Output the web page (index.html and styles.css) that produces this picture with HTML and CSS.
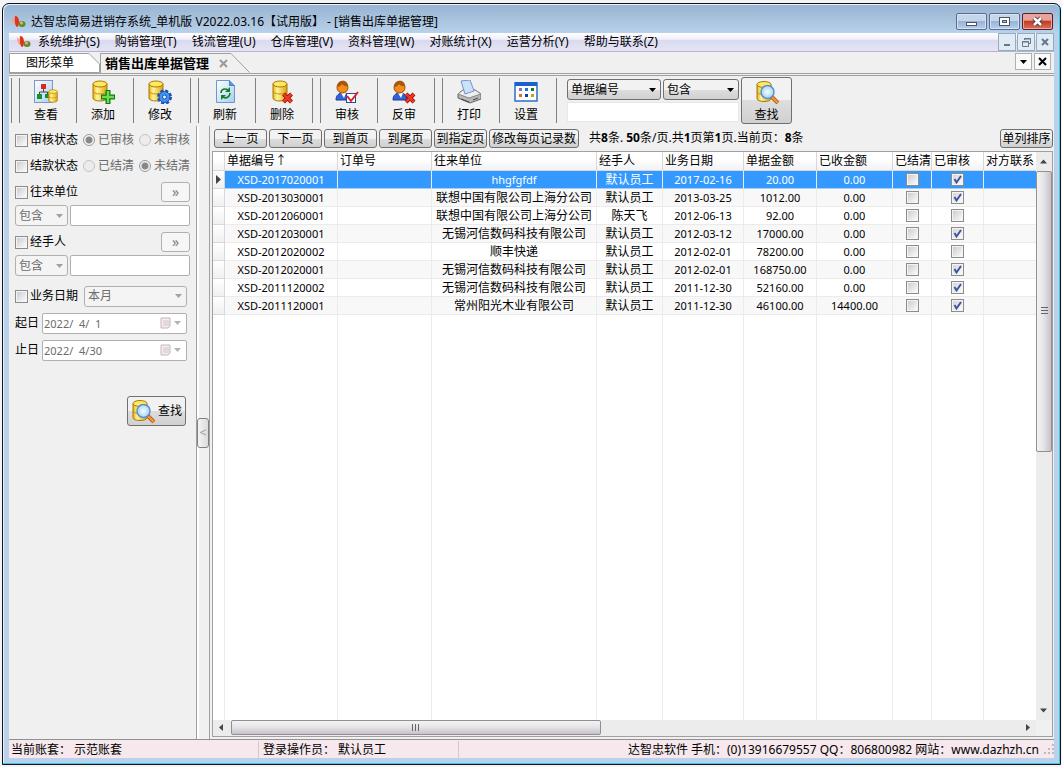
FILE: index.html
```
<!DOCTYPE html>
<html lang="zh-CN">
<head>
<meta charset="utf-8">
<title>达智忠简易进销存系统</title>
<link rel="stylesheet" href="styles.css">
</head>
<body>
<svg class="defs" aria-hidden="true">
  <defs>
    <linearGradient id="gold"><stop offset="0" stop-color="#e8b414"/><stop offset=".3" stop-color="#fff59a"/><stop offset="1" stop-color="#e0a010"/></linearGradient>
    <radialGradient id="lens"><stop offset="0" stop-color="#f4fcff"/><stop offset="1" stop-color="#a8d4f4"/></radialGradient>
    <linearGradient id="page" x2="1" y2="1"><stop offset="0" stop-color="#fff"/><stop offset="1" stop-color="#a9cdf3"/></linearGradient>
    <symbol id="db" viewBox="0 0 16 22"><path d="M1 4v14c0 4 14 4 14 0V4z" fill="url(#gold)" stroke="#a87808"/><ellipse cx="8" cy="4" rx="7" ry="3" fill="#ffe95c" stroke="#a87808"/><path d="M1 11c0 4 14 4 14 0" fill="none" stroke="#c8900c"/></symbol>
    <symbol id="user" viewBox="0 0 24 24"><path d="M1 20c0-5 3-7 7-7s7 2 7 7z" fill="#3263d8" stroke="#1a3c9c"/><path d="M6 13l3 5 2-5z" fill="#fff"/><circle cx="7.500" cy="7.500" r="5.500" fill="#f28c1c" stroke="#9c4a08"/><path d="M2 7c0-8 11-8 11-1-3 1-5-1-6-2-1 2-3 3-5 3z" fill="#a8560c"/></symbol>
    <symbol id="cross" viewBox="0 0 12 12"><path d="M2 2l8 8M10 2l-8 8" stroke="#8c0c04" stroke-width="4"/><path d="M2 2l8 8M10 2l-8 8" stroke="#f03820" stroke-width="2.500"/></symbol>
    <symbol id="find" viewBox="0 0 24 24"><use href="#db" x="1" y="0" width="16" height="23"/><path d="M17 17l6 6" stroke="#b85c10" stroke-width="4"/><path d="M17 17l6 6" stroke="#f59a3c" stroke-width="2"/><circle cx="12.500" cy="12" r="6.500" fill="url(#lens)" stroke="#5c90d0" stroke-width="1.500"/></symbol>
    <symbol id="logo" viewBox="0 0 14 12"><path d="M3 0c3 0 4 3 4 6s-1 5-2 5-3-4-2-11z" fill="#e23318"/><path d="M0 1c2 1 3 5 3 8-2-1-3-4-3-8z" fill="#f8a090"/><ellipse cx="10" cy="8" rx="3.500" ry="3" fill="#5c8c30"/><circle cx="9.500" cy="7" r="1.500" fill="#f4b060"/></symbol>
    <symbol id="cal" viewBox="0 0 12 12"><path d="M1 1h9v8l-2 2H1z" fill="#f6eeee" stroke="#c4b4b8"/><path d="M3 4h6M3 6h6M3 8h6M4 3v6M6 3v6M8 3v6" stroke="#d4c8c8" stroke-width=".6"/></symbol>
  </defs>
</svg>
<div class="window">
  <header class="titlebar">
    <svg class="logo"><use href="#logo"/></svg>
    <h1 class="title">达智忠简易进销存系统_单机版 V2022.03.16【试用版】 - [销售出库单据管理]</h1>
    <div class="winbtns">
      <button class="winbtn" aria-label="最小化"><svg viewBox="0 0 29 15"><rect x="9.500" y="8.500" width="10" height="3" fill="#fff" stroke="#4c5468"/></svg></button>
      <button class="winbtn" aria-label="最大化"><svg viewBox="0 0 29 15"><rect x="9.500" y="3.500" width="10" height="8" fill="#fff" stroke="#4c5468"/><rect x="12.500" y="6.500" width="4" height="2" fill="#a8c0dc" stroke="#4c5468"/></svg></button>
      <button class="winbtn winbtn-close" aria-label="关闭"><svg viewBox="0 0 29 15"><path d="M11 4l7 7M18 4l-7 7" stroke="#4c3448" stroke-width="4.500"/><path d="M11 4l7 7M18 4l-7 7" stroke="#fff" stroke-width="2.500"/></svg></button>
    </div>
  </header>
  <nav class="menubar">
    <svg class="logo"><use href="#logo"/></svg>
    <button class="menu">系统维护(S)</button>
    <button class="menu">购销管理(T)</button>
    <button class="menu">钱流管理(U)</button>
    <button class="menu">仓库管理(V)</button>
    <button class="menu">资料管理(W)</button>
    <button class="menu">对账统计(X)</button>
    <button class="menu">运营分析(Y)</button>
    <button class="menu">帮助与联系(Z)</button>
    <div class="mdibtns">
      <button class="mdibtn" aria-label="最小化子窗口"><svg viewBox="0 0 16 16"><path d="M5 11h6" stroke="#64788c" stroke-width="2"/></svg></button>
      <button class="mdibtn" aria-label="还原子窗口"><svg viewBox="0 0 16 16"><path d="M6.500 6V4.500h6v5H11M6 5h7" fill="none" stroke="#64788c"/><path d="M4.500 7.500h6v5h-6zM4 8h7" fill="none" stroke="#64788c"/></svg></button>
      <button class="mdibtn" aria-label="关闭子窗口"><svg viewBox="0 0 16 16"><path d="M5 5l6 6M11 5l-6 6" stroke="#64788c" stroke-width="2"/></svg></button>
    </div>
  </nav>
  <div class="tabs">
    <button class="tab"><svg class="tabshape" viewBox="0 0 91 20"><path d="M.5 20V.500H80L90.500 11v8.500H0" fill="#fff" stroke="#a0a0a0"/></svg><span>图形菜单</span></button>
    <button class="tab tab-active"><svg class="tabshape" viewBox="0 0 150 20"><path d="M.5 20V.500H131L149.500 19.500" fill="#f0f0f0" stroke="#a0a0a0"/></svg><span>销售出库单据管理</span><svg class="tabclose" viewBox="0 0 9 9"><path d="M1 1l7 7M8 1L1 8" stroke="#999" stroke-width="2"/></svg></button>
    <div class="tabtools">
      <button class="tabtool" aria-label="标签列表"><svg viewBox="0 0 15 15"><path d="M4 6h7l-3.500 4z"/></svg></button>
      <button class="tabtool" aria-label="关闭标签"><svg viewBox="0 0 15 15"><path d="M4 4l7 7M11 4l-7 7" stroke="#000" stroke-width="2"/></svg></button>
    </div>
  </div>
  <div class="toolbar">
    <div class="toolgroup">
      <button class="tool"><svg class="icon" viewBox="0 0 24 24"><rect x=".5" y=".5" width="18" height="22" fill="url(#page)" stroke="#7c98c8"/><path d="M9.500 8v4M5.500 15v-3h8v3" fill="none" stroke="#444"/><rect x="7" y="4" width="5" height="5" fill="#e02818"/><rect x="3" y="14" width="5" height="5" fill="#189028"/><rect x="11" y="14" width="4" height="4" fill="#189028"/><use href="#db" x="14" y="9" width="10" height="14"/></svg><span>查看</span></button>
      <button class="tool"><svg class="icon" viewBox="0 0 24 24"><use href="#db" x="1" y="0" width="16" height="22"/><path d="M17 10v14M10 17h14" stroke="#0c7c10" stroke-width="5"/><path d="M17 11v12M11 17h12" stroke="#6cdc50" stroke-width="2.500"/></svg><span>添加</span></button>
      <button class="tool"><svg class="icon" viewBox="0 0 24 24"><use href="#db" x="0" y="0" width="16" height="22"/><circle cx="16.500" cy="17" r="6" fill="none" stroke="#1c50b4" stroke-width="3" stroke-dasharray="3 1.700"/><circle cx="16.500" cy="17" r="5.500" fill="#3f94f0" stroke="#1c50b4"/><circle cx="16.500" cy="17" r="2" fill="#e8f4ff" stroke="#1c50b4"/></svg><span>修改</span></button>
    </div>
    <div class="toolgroup">
      <button class="tool"><svg class="icon" viewBox="0 0 24 24"><path d="M3.500 .5h13l5 5v17h-18z" fill="url(#page)" stroke="#6c98d0"/><path d="M16.500 .5v5h5" fill="#5c98e8" stroke="#4c80c8"/><path d="M8 13c0-4 4-5 7-3M17 13c0 4-4 6-7 4" fill="none" stroke="#108020" stroke-width="1.600"/><path d="M17 7v5h-5zM8 20v-5h5z" fill="#108020"/></svg><span>刷新</span></button>
      <button class="tool"><svg class="icon" viewBox="0 0 24 24"><use href="#db" x="2" y="0" width="16" height="22"/><use href="#cross" x="11" y="12" width="13" height="12"/></svg><span>删除</span></button>
    </div>
    <div class="toolgroup">
      <button class="tool"><svg class="icon" viewBox="0 0 24 24"><use href="#user" width="24" height="24"/><rect x="11.500" y="13.500" width="9" height="9" fill="#fff" stroke="#284898"/><path d="M12 16l4 5 7-9" fill="none" stroke="#e02020" stroke-width="2"/></svg><span>审核</span></button>
      <button class="tool"><svg class="icon" viewBox="0 0 24 24"><use href="#user" width="24" height="24"/><use href="#cross" x="12" y="12" width="12" height="12"/></svg><span>反审</span></button>
    </div>
    <div class="toolgroup">
      <button class="tool"><svg class="icon" viewBox="0 0 24 24"><path d="M1 14l5-4h12l6 4v5l-11 4L1 18z" fill="#b8b8b8" stroke="#666"/><path d="M1 14l11 4 12-4-6-4H6z" fill="#eee" stroke="#888"/><path d="M4 1l9-1 4 11-9 3z" fill="#c8e2fc" stroke="#7c90c4"/><path d="M4 19l8 3M16 20l5-2" stroke="#444"/></svg><span>打印</span></button>
      <button class="tool"><svg class="icon" viewBox="0 0 24 24"><rect x="1" y="3" width="22" height="18" fill="#fff" stroke="#2c6cc8" stroke-width="1.500"/><path d="M1 4h22" stroke="#1c60d0" stroke-width="4"/><path d="M5 9.500h3" stroke="#8870b8" stroke-width="3"/><path d="M11 9.500h3" stroke="#2870e0" stroke-width="3"/><path d="M17 9.500h3" stroke="#108020" stroke-width="3"/><path d="M5 15.500h3" stroke="#f06030" stroke-width="3"/><path d="M11 15.500h3" stroke="#103cb0" stroke-width="3"/><path d="M17 15.500h3" stroke="#d09818" stroke-width="3"/></svg><span>设置</span></button>
    </div>
    <form class="search">
      <div class="searchfields">
        <div class="searchselects">
          <select class="select select-field" aria-label="查找字段"><option>单据编号</option></select>
          <select class="select select-match" aria-label="匹配方式"><option>包含</option></select>
        </div>
        <input class="searchtext" type="text" aria-label="查找内容">
      </div>
      <button class="searchbtn" type="button"><svg class="icon"><use href="#find"/></svg><span>查找</span></button>
    </form>
  </div>
  <main class="main">
    <aside class="filters">
      <div class="filter">
        <label class="check"><input type="checkbox">审核状态</label>
        <label class="radio"><input type="radio" name="audit" checked disabled>已审核</label>
        <label class="radio"><input type="radio" name="audit" disabled>未审核</label>
      </div>
      <div class="filter">
        <label class="check"><input type="checkbox">结款状态</label>
        <label class="radio"><input type="radio" name="settle" disabled>已结清</label>
        <label class="radio"><input type="radio" name="settle" checked disabled>未结清</label>
      </div>
      <div class="filter filter-split">
        <label class="check"><input type="checkbox">往来单位</label>
        <button class="more" disabled>»</button>
      </div>
      <div class="filter filter-input">
        <select class="select" disabled aria-label="往来单位匹配"><option>包含</option></select>
        <input class="text" type="text" disabled aria-label="往来单位内容">
      </div>
      <div class="filter filter-split">
        <label class="check"><input type="checkbox">经手人</label>
        <button class="more" disabled>»</button>
      </div>
      <div class="filter filter-input">
        <select class="select" disabled aria-label="经手人匹配"><option>包含</option></select>
        <input class="text" type="text" disabled aria-label="经手人内容">
      </div>
      <div class="filter filter-date">
        <label class="check"><input type="checkbox">业务日期</label>
        <select class="select" disabled aria-label="日期范围"><option>本月</option></select>
      </div>
      <div class="filter filter-day">
        <label for="from">起日</label>
        <div class="datebox"><input id="from" class="date" type="text" value="2022/  4/  1" disabled><svg class="cal"><use href="#cal"/></svg><svg class="drop" viewBox="0 0 7 4"><path d="M0 0h7L3.500 4z" fill="#b8b4ac"/></svg></div>
      </div>
      <div class="filter filter-day">
        <label for="to">止日</label>
        <div class="datebox"><input id="to" class="date" type="text" value="2022/  4/30" disabled><svg class="cal"><use href="#cal"/></svg><svg class="drop" viewBox="0 0 7 4"><path d="M0 0h7L3.500 4z" fill="#b8b4ac"/></svg></div>
      </div>
      <button class="findbtn"><svg class="icon"><use href="#find"/></svg>查找</button>
    </aside>
    <div class="splitter"><button class="collapse" aria-label="收起筛选栏">&lt;</button></div>
    <section class="content">
      <div class="pager">
        <button class="page">上一页</button>
        <button class="page">下一页</button>
        <button class="page">到首页</button>
        <button class="page">到尾页</button>
        <button class="page">到指定页</button>
        <button class="page page-wide">修改每页记录数</button>
        <p class="summary">共<b>8</b>条. <b>50</b>条/页.共<b>1</b>页第<b>1</b>页.当前页：<b>8</b>条</p>
        <button class="page sort">单列排序</button>
      </div>
      <div class="gridbox">
        <div class="tablebox">
          <table class="grid">
            <colgroup><col class="c-mark"><col class="c-no"><col class="c-order"><col class="c-unit"><col class="c-staff"><col class="c-date"><col class="c-sum"><col class="c-paid"><col class="c-settled"><col class="c-audited"><col></colgroup>
            <thead><tr><th></th><th>单据编号↑</th><th>订单号</th><th>往来单位</th><th>经手人</th><th>业务日期</th><th>单据金额</th><th>已收金额</th><th>已结清</th><th>已审核</th><th>对方联系</th></tr></thead>
            <tbody>
              <tr class="selected"><th><svg class="mark" viewBox="0 0 5 9"><path d="M0 0l5 4.500L0 9z" fill="#444"/></svg></th><td>XSD-2017020001</td><td></td><td>hhgfgfdf</td><td class="cn">默认员工</td><td>2017-02-16</td><td>20.00</td><td>0.00</td><td><input type="checkbox" aria-label="已结清"></td><td><input type="checkbox" aria-label="已审核" checked></td><td></td></tr>
              <tr><th></th><td>XSD-2013030001</td><td></td><td class="cn">联想中国有限公司上海分公司</td><td class="cn">默认员工</td><td>2013-03-25</td><td>1012.00</td><td>0.00</td><td><input type="checkbox" aria-label="已结清"></td><td><input type="checkbox" aria-label="已审核" checked></td><td></td></tr>
              <tr><th></th><td>XSD-2012060001</td><td></td><td class="cn">联想中国有限公司上海分公司</td><td class="cn">陈天飞</td><td>2012-06-13</td><td>92.00</td><td>0.00</td><td><input type="checkbox" aria-label="已结清"></td><td><input type="checkbox" aria-label="已审核"></td><td></td></tr>
              <tr><th></th><td>XSD-2012030001</td><td></td><td class="cn">无锡河信数码科技有限公司</td><td class="cn">默认员工</td><td>2012-03-12</td><td>17000.00</td><td>0.00</td><td><input type="checkbox" aria-label="已结清"></td><td><input type="checkbox" aria-label="已审核" checked></td><td></td></tr>
              <tr><th></th><td>XSD-2012020002</td><td></td><td class="cn">顺丰快递</td><td class="cn">默认员工</td><td>2012-02-01</td><td>78200.00</td><td>0.00</td><td><input type="checkbox" aria-label="已结清"></td><td><input type="checkbox" aria-label="已审核"></td><td></td></tr>
              <tr><th></th><td>XSD-2012020001</td><td></td><td class="cn">无锡河信数码科技有限公司</td><td class="cn">默认员工</td><td>2012-02-01</td><td>168750.00</td><td>0.00</td><td><input type="checkbox" aria-label="已结清"></td><td><input type="checkbox" aria-label="已审核" checked></td><td></td></tr>
              <tr><th></th><td>XSD-2011120002</td><td></td><td class="cn">无锡河信数码科技有限公司</td><td class="cn">默认员工</td><td>2011-12-30</td><td>52160.00</td><td>0.00</td><td><input type="checkbox" aria-label="已结清"></td><td><input type="checkbox" aria-label="已审核" checked></td><td></td></tr>
              <tr><th></th><td>XSD-2011120001</td><td></td><td class="cn">常州阳光木业有限公司</td><td class="cn">默认员工</td><td>2011-12-30</td><td>46100.00</td><td>14400.00</td><td><input type="checkbox" aria-label="已结清"></td><td><input type="checkbox" aria-label="已审核" checked></td><td></td></tr>
              <tr class="filler"><td></td><td></td><td></td><td></td><td></td><td></td><td></td><td></td><td></td><td></td><td></td></tr>
            </tbody>
          </table>
        </div>
        <div class="vscroll">
          <svg class="arrow" viewBox="0 0 15 18"><path d="M4 11h7L7.500 7z" fill="#444"/></svg>
          <div class="vtrack"><div class="vthumb"><svg class="vgrip" viewBox="0 0 7 8"><path d="M0 .5h7M0 3.500h7M0 6.500h7" stroke="#666"/></svg></div></div>
          <svg class="arrow" viewBox="0 0 15 18"><path d="M4 7h7l-3.500 4z" fill="#444"/></svg>
        </div>
        <div class="hscroll">
          <svg class="arrow" viewBox="0 0 18 15"><path d="M10 4v7L6 7.500z" fill="#444"/></svg>
          <div class="htrack"><div class="hthumb"><svg class="hgrip" viewBox="0 0 8 7"><path d="M.5 0v7M3.500 0v7M6.500 0v7" stroke="#666"/></svg></div></div>
          <svg class="arrow" viewBox="0 0 18 15"><path d="M8 4v7l4-3.500z" fill="#444"/></svg>
        </div>
      </div>
    </section>
  </main>
  <footer class="status">
    <div class="pane pane-book">当前账套：&nbsp;示范账套</div>
    <div class="pane pane-user">登录操作员：&nbsp;默认员工</div>
    <div class="pane pane-info">达智忠软件 手机：(0)13916679557 QQ：806800982 网站：www.dazhzh.cn</div>
    <svg class="sizegrip" viewBox="0 0 10 10"><path d="M8 1h2M8 5h2M4 5h2M8 9h2M4 9h2M0 9h2" stroke="#c4b8bc" stroke-width="2"/></svg>
  </footer>
</div>
</body>
</html>
```
FILE: styles.css
```
* { box-sizing: border-box; }
html, body { height: 100%; }
body {
  margin: 0;
  padding: 3px 1px 2px 2px;
  background: #f4f4f6;
  color: #000;
  font: 12px/16px "Noto Sans", "Noto Sans CJK SC", sans-serif;
}
button, input, select { font: inherit; color: inherit; margin: 0; }
button { padding: 0; border: 0; background: none; white-space: nowrap; }
svg { display: block; flex: none; }
.defs { position: absolute; width: 0; height: 0; }

.window {
  display: flex;
  flex-direction: column;
  height: 100%;
  padding: 0 6px 6px;
  border: 1px solid #101418;
  border-radius: 7px 7px 0 0;
  background: #b9d1ea;
  box-shadow: inset 0 -1px #40c8e8, inset -1px 0 #40c8e8, inset 1px 1px #e8f2fc;
}
.titlebar {
  display: flex;
  align-items: center;
  gap: 5px;
  height: 28px;
  margin: 1px -5px 0;
  padding: 5px 6px 0 8px;
  border-radius: 6px 6px 0 0;
  background: linear-gradient(#98b4d2, #b9d1ea);
}
.logo { width: 14px; height: 12px; }
.title { flex: 1; margin: 0; font-size: 12px; font-weight: 400; white-space: pre; }
.winbtns { display: flex; gap: 2px; }
.winbtn {
  width: 31px;
  height: 17px;
  border: 1px solid #5c6c90;
  border-radius: 2px;
  background: linear-gradient(#c4d6ea 0 45%, #98b4d4 50%, #b4d0ec);
  box-shadow: inset 0 0 0 1px #d4e2f2;
}
.winbtn-close {
  border-color: #58202c;
  background: linear-gradient(#e8a498 0 40%, #c03c24 50%, #d8745c);
  box-shadow: inset 0 0 0 1px #eca498;
}

.menubar {
  display: flex;
  align-items: center;
  gap: 15px;
  height: 19px;
  padding-left: 8px;
  border-bottom: 1px solid #b4b4cc;
  background: linear-gradient(#fff, #f0eefa 35%, #d8daf0 40%, #e6e4f4);
}
.menubar .logo { margin-right: -8px; }
.mdibtns { display: flex; gap: 1px; margin-left: auto; }
.mdibtn { width: 18px; height: 18px; border: 1px solid #94acc0; background: #e0ebf6; }

.tabs { display: flex; height: 24px; padding-top: 1px; background: #f0f0f0; border-bottom: 3px double #a0a0a0; }
.tab { position: relative; display: flex; align-items: center; width: 91px; height: 20px; padding-left: 17px; }
.tab span { position: relative; }
.tab-active { width: 150px; padding-left: 5px; gap: 10px; font-size: 13px; font-weight: 700; }
.tabshape { position: absolute; inset: 0; width: 100%; height: 100%; }
.tabclose { position: relative; width: 9px; height: 9px; }
.tabtools { display: flex; gap: 2px; margin-left: auto; padding-right: 3px; }
.tabtool { width: 17px; height: 17px; border: 1px solid #b0b0b0; background: #fafafa; }

.toolbar { display: flex; height: 50px; padding: 2px 0 3px 2px; background: #f0f0f0; }
.toolgroup { display: flex; margin-right: 7px; border-left: 1px solid #808080; }
.toolgroup:first-child { padding-left: 7px; }
.toolgroup:first-child .tool:first-child { border-left: 1px solid #808080; width: 58px; }
.tool {
  display: flex;
  flex-direction: column;
  align-items: center;
  gap: 3px;
  width: 57px;
  padding: 2px 4px 0 0;
  border-right: 1px solid #808080;
}
.icon { width: 24px; height: 24px; }
.search { display: flex; gap: 2px; margin-left: 3px; }
.searchfields { display: flex; flex-direction: column; gap: 2px; width: 172px; padding-top: 1px; }
.searchselects { display: flex; gap: 2px; }
.select {
  appearance: none;
  height: 21px;
  padding: 0 18px 0 3px;
  border: 1px solid #707070;
  border-radius: 3px;
  background: url("data:image/svg+xml,%3Csvg xmlns='http://www.w3.org/2000/svg' width='7' height='4'%3E%3Cpath d='M0 0h7L3.500 4z'/%3E%3C/svg%3E") right 4px center no-repeat, linear-gradient(#f2f2f2 50%, #dedede 50%, #d0d0d0);
}
.select:disabled {
  color: #6c6c6c;
  opacity: 1;
  border-color: #b0b0b0;
  background: url("data:image/svg+xml,%3Csvg xmlns='http://www.w3.org/2000/svg' width='7' height='4'%3E%3Cpath fill='%23a0a0a0' d='M0 0h7L3.500 4z'/%3E%3C/svg%3E") right 4px center no-repeat #f4f4f4;
}
.select-field { width: 94px; }
.select-match { width: 76px; }
.searchtext { width: 100%; height: 20px; border: 1px solid #ece4ec; background: #fff; }
.searchbtn {
  display: flex;
  flex-direction: column;
  align-items: center;
  gap: 3px;
  width: 51px;
  height: 47px;
  margin-top: -1px;
  padding-top: 2px;
  border: 1px solid #707070;
  border-radius: 3px;
  background: linear-gradient(#f2f2f2 50%, #dedede 50%, #d0d0d0);
}

.main { display: flex; flex: 1; min-height: 0; background: #f0f0f0; }
.filters { display: flex; flex-direction: column; width: 187px; padding: 4px 6px 0; }
.filter { display: flex; align-items: center; height: 20px; white-space: nowrap; }
.filter + .filter { margin-top: 6px; }
.filters .filter-input { gap: 2px; height: 21px; margin-top: 3px; }
.filters .filter-input .select { width: 53px; }
.filter-split { justify-content: space-between; }
.filters .filter-date { gap: 6px; margin-top: 10px; padding-right: 3px; }
.filter-date .select { flex: 1; min-width: 0; }
.filters .filter-day { gap: 3px; margin-top: 7px; padding-right: 3px; }
.check, .radio { display: flex; align-items: center; }
.check { gap: 2px; }
.radio { gap: 3px; margin-left: 5px; color: #6c6c6c; }
.check input, .grid input {
  appearance: none;
  width: 13px;
  height: 13px;
  border: 1px solid #8c8c8c;
  background: linear-gradient(135deg, #c8c8cc, #fff);
  box-shadow: inset 0 0 0 1px #f4f4f4;
}
.grid input { display: block; margin: 0 auto; }
.grid input:checked {
  background: url("data:image/svg+xml,%3Csvg xmlns='http://www.w3.org/2000/svg' width='11' height='11'%3E%3Cpath d='M2.500 5l2 3.500L9 2' fill='none' stroke='%23405498' stroke-width='2'/%3E%3C/svg%3E") center no-repeat, linear-gradient(135deg, #d0d0d8, #fff);
}
.radio input {
  appearance: none;
  width: 12px;
  height: 12px;
  border: 1px solid #c4c4c4;
  border-radius: 50%;
  background: #ececec;
}
.radio input:checked { border-color: #989898; background: radial-gradient(circle, #888 0 3px, #f4f4f4 4px); }
.more { width: 29px; height: 20px; border: 1px solid #b0b0b0; border-radius: 3px; background: #f6f6f6; color: #808080; font-size: 14px; line-height: 14px; }
.text, .date { flex: 1; min-width: 0; height: 21px; border: 1px solid #b0b0b0; border-radius: 2px; background: #fff; }
.datebox { position: relative; display: flex; flex: 1; min-width: 0; }
.date { padding: 0 1px; font-size: 11px; color: #6c6c6c; white-space: pre; }
.cal { position: absolute; top: 4px; right: 15px; width: 12px; height: 12px; }
.drop { position: absolute; top: 8px; right: 6px; width: 7px; height: 4px; }
.findbtn {
  display: flex;
  align-items: center;
  align-self: flex-end;
  gap: 3px;
  width: 59px;
  height: 30px;
  margin: 36px 4px 0 0;
  padding-left: 3px;
  border: 1px solid #707070;
  border-radius: 3px;
  background: linear-gradient(#f2f2f2 50%, #dedede 50%, #d0d0d0);
}
.splitter {
  display: flex;
  align-items: center;
  width: 14px;
  border-left: 1px solid #a0a0a0;
  border-right: 1px solid #a0a0a0;
  background: #f0f0f0;
  box-shadow: inset 2px 0 #fff;
}
.collapse { width: 13px; height: 30px; border: 1px solid #808080; border-radius: 3px; background: linear-gradient(90deg, #f4f4f4, #dcdcdc); color: #8c9cb0; }

.content { display: flex; flex-direction: column; flex: 1; min-width: 0; padding: 3px 1px 2px 2px; }
.pager { display: flex; gap: 2px; height: 22px; padding-left: 2px; }
.page {
  width: 53px;
  height: 19px;
  border: 1px solid #707070;
  border-radius: 3px;
  background: linear-gradient(#f2f2f2 50%, #dedede 50%, #d0d0d0);
  line-height: 16px;
}
.page-wide { width: 90px; }
.sort { margin-left: auto; }
.summary { margin: 1px 0 0 8px; white-space: nowrap; }

.gridbox {
  display: grid;
  grid-template: minmax(0, 1fr) 16px / minmax(0, 1fr) 16px;
  flex: 1;
  min-height: 0;
  border: 1px solid #a0a0a0;
  background: #f0f0f0;
}
.tablebox { background: #fff; overflow: hidden; }
.grid { width: 100%; height: 100%; table-layout: fixed; border-collapse: separate; border-spacing: 0; }
.c-mark { width: 12px; }
.c-no { width: 113px; }
.c-order { width: 94px; }
.c-unit { width: 165px; }
.c-staff { width: 66px; }
.c-date { width: 81px; }
.c-sum { width: 73px; }
.c-paid { width: 76px; }
.c-settled { width: 39px; }
.c-audited { width: 52px; }
.grid th, .grid td {
  height: 18px;
  padding: 0;
  border-right: 1px solid #ebebeb;
  border-bottom: 1px solid #ebebeb;
  overflow: hidden;
  white-space: nowrap;
  font-weight: 400;
  line-height: 16px;
}
.grid thead th { height: 19px; padding-left: 2px; text-align: left; background: linear-gradient(#fff 40%, #f2f2f2); border-color: #d8d8d8; }
.grid tbody th { background: linear-gradient(#fff, #f0f0f0); border-color: #d8d8d8; }
.grid td { text-align: center; font-size: 11px; }
.grid td.cn { font-size: 12px; }
.grid tbody tr:nth-child(even) td { background: #f8f8f8; }
.grid .selected td { background: #3399ff; color: #fff; border-bottom-color: #a8cdf2; }
.grid tr.filler td { height: auto; border-bottom: 0; background: #fff; }
.grid tr > :last-child { border-right: 0; }
.mark { width: 5px; height: 9px; margin: 0 auto; }

.vscroll { display: flex; flex-direction: column; background: #ececec; }
.vscroll .arrow { width: 15px; height: 19px; }
.vtrack { flex: 1; }
.vthumb, .hthumb { display: flex; align-items: center; justify-content: center; border: 1px solid #909090; border-radius: 2px; }
.vthumb { height: 53%; background: linear-gradient(90deg, #f4f4f4, #e4e2e6 50%, #c8c0cc); }
.hthumb { width: 47%; height: 15px; background: linear-gradient(#f4f4f4, #e4e2e6 50%, #c8c0cc); }
.vgrip { width: 7px; height: 8px; }
.hgrip { width: 8px; height: 7px; }
.hscroll { display: flex; background: #ececec; }
.hscroll .arrow { width: 18px; height: 15px; }
.htrack { flex: 1; }

.status {
  display: flex;
  align-items: center;
  height: 19px;
  border-top: 1px solid #909090;
  background: #f6e8ec;
  white-space: nowrap;
}
.pane { height: 17px; padding: 0 2px; line-height: 18px; }
.pane-book { width: 250px; border-right: 1px solid #d4c8cc; }
.pane-user { width: 200px; padding-left: 4px; border-right: 1px solid #d4c8cc; }
.pane-info { flex: 1; text-align: right; }
.sizegrip { width: 10px; height: 10px; margin-left: 3px; }
```
